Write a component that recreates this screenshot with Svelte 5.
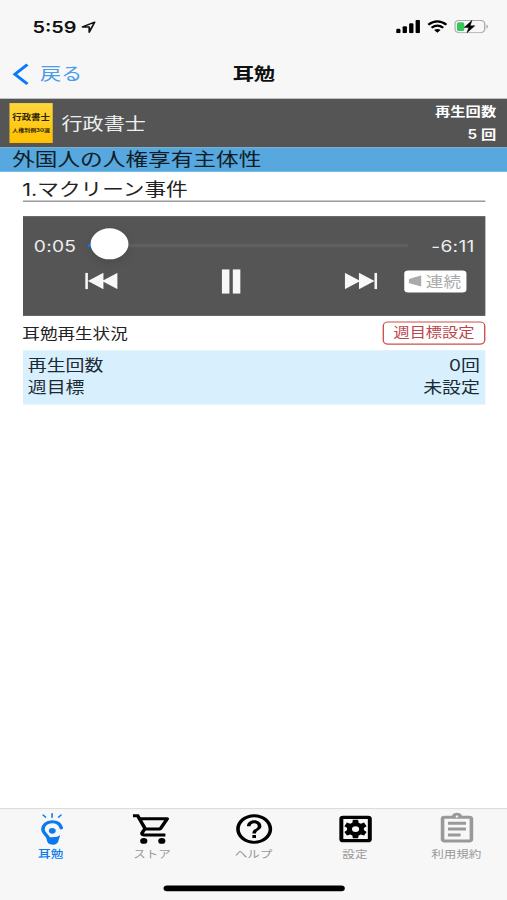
<script>
    const tabs = [
        { label: "耳勉", icon: "ear", active: true },
        { label: "ストア", icon: "cart" },
        { label: "ヘルプ", icon: "help" },
        { label: "設定", icon: "settings" },
        { label: "利用規約", icon: "terms", muted: true },
    ];

    const stats = [
        { label: "再生回数", value: "0回" },
        { label: "週目標", value: "未設定" },
    ];

    const elapsed = 5;
    const duration = 376;

    function formatTime(seconds) {
        const rest = seconds % 60;
        return `${Math.floor(seconds / 60)}:${rest < 10 ? "0" : ""}${rest}`;
    }
</script>

<div class="screen">
    <header>
        <div class="status">
            <span class="clock">5:59</span>
            <svg class="location" width="11" height="11" viewBox="0 0 11 11">
                <path d="M1 5.3 10 1 6 10V5.4Z" fill="none" stroke="#111" stroke-width="1.3" stroke-linejoin="round" />
            </svg>
            <svg class="signal" width="18" height="12" viewBox="0 0 18 12">
                <rect x="0" y="8" width="3.2" height="4" rx="1" />
                <rect x="4.8" y="5.6" width="3.2" height="6.4" rx="1" />
                <rect x="9.6" y="3" width="3.2" height="9" rx="1" />
                <rect x="14.4" y="0" width="3.2" height="12" rx="1" />
            </svg>
            <svg class="wifi" width="15" height="12" viewBox="0 0 15 12">
                <path d="M.8 4.3Q7.5-1.9 14.2 4.3M3.2 7Q7.5 3.2 11.8 7" fill="none" stroke="#000" stroke-width="1.9" />
                <path d="m7.5 11.6-2.4-2.5q2.4-1.9 4.8 0Z" />
            </svg>
            <svg width="25" height="12" viewBox="0 0 25 12">
                <rect x=".5" y=".5" width="22" height="11" rx="3" fill="none" stroke="#aaa" />
                <path d="M23.8 4v4q1.2-.6 1.2-2t-1.2-2Z" fill="#aaa" />
                <rect x="2" y="2" width="5.4" height="8" rx="1.4" fill="#34c759" />
                <path d="M13.1.4 7.3 6.7h3.4L9.4 11.6l5.8-6.3h-3.5Z" stroke="#000" stroke-width=".4" />
            </svg>
        </div>
        <nav>
            <button class="back" type="button">
                <svg width="13" height="20" viewBox="0 0 13 20">
                    <path d="M11.3 1.2 2 10l9.3 8.8" fill="none" stroke="#0a7aff" stroke-width="2.4" />
                </svg>
                戻る
            </button>
            <h1>耳勉</h1>
        </nav>
    </header>

    <main>
        <section class="course">
            <div class="cover">
                <span>行政書士</span>
                <small>人権判例30選</small>
            </div>
            <h2>行政書士</h2>
            <div class="plays">
                <div>再生回数</div>
                <div>5 回</div>
            </div>
        </section>
        <div class="chapter">外国人の人権享有主体性</div>

        <div class="content">
            <h3>1.マクリーン事件</h3>

            <div class="player">
                <div class="progress">
                    <span class="time">{formatTime(elapsed)}</span>
                    <div class="track">
                        <div class="played"></div>
                        <div class="thumb"></div>
                    </div>
                    <span class="time">-{formatTime(duration - elapsed)}</span>
                </div>
                <div class="controls">
                    <button type="button" aria-label="前へ">
                        <svg width="24" height="15" viewBox="0 0 24 15">
                            <path d="M0 0h2v15H0ZM13.5 0v15L2 7.5ZM24 0v15L12.5 7.5Z" />
                        </svg>
                    </button>
                    <button type="button" aria-label="一時停止">
                        <svg width="14" height="22" viewBox="0 0 14 22">
                            <path d="M0 0h5.7v22H0ZM8.2 0h5.7v22H8.2Z" />
                        </svg>
                    </button>
                    <button type="button" aria-label="次へ">
                        <svg width="24" height="15" viewBox="0 0 24 15">
                            <path d="M0 0v15l11.5-7.5ZM10.5 0v15L22 7.5ZM22 0h2v15h-2Z" />
                        </svg>
                    </button>
                    <button class="repeat" type="button">
                        <svg width="10" height="11" viewBox="0 0 10 12">
                            <path d="M0 4.2 2.5 3 10 .5v11L2.5 9 0 8Z" />
                        </svg>
                        連続
                    </button>
                </div>
            </div>

            <div class="stats-head">
                <span>耳勉再生状況</span>
                <button type="button">週目標設定</button>
            </div>
            <dl>
                {#each stats as stat}
                    <div>
                        <dt>{stat.label}</dt>
                        <dd>{stat.value}</dd>
                    </div>
                {/each}
            </dl>
        </div>
    </main>

    <footer>
        <div class="tabs">
            {#each tabs as tab}
                <div class="tab" class:active={tab.active} class:muted={tab.muted}>
                    <svg width="32" height="32" viewBox="0 0 24 24">
                        {#if tab.icon === "ear"}
                            <path d="m7.2 2.2 1.8 2M12.4 1.3v3M17.6 2.2l-1.8 2" fill="none" stroke="currentColor" stroke-width=".9" />
                            <path d="M17.5 11.2C16.9 8.6 15 7.1 12.4 7.1 9.400 7.100 7.300 9.400 7.300 12.300c0 2.300 1.900 3.500 2.700 5.100" fill="none" stroke="currentColor" stroke-width="2" stroke-linecap="round" />
                            <path d="M9 16.600c1.400.900 3.300.900 4.800.800 1.200 0 2.200-.500 3-1.400-.1 1.700-.6 2.400-.8 3.600-.3 2-1.300 3-3.200 3-2.100 0-3-1.300-3.300-3Z" />
                            <circle cx="12.5" cy="13.2" r="1.9" />
                        {:else if tab.icon === "cart"}
                            <path d="M15.55 13c.75 0 1.41-.41 1.75-1.03l3.58-6.49A.996.996 0 0 0 20.01 4H5.21l-.94-2H1v2h2l3.6 7.59-1.35 2.44C4.52 15.37 5.48 17 7 17h12v-2H7l1.1-2h7.45ZM6.16 6h12.15l-2.76 5H8.53L6.16 6Z" />
                            <circle cx="7" cy="20" r="2" />
                            <circle cx="17" cy="20" r="2" />
                        {:else if tab.icon === "help"}
                            <path d="M11 18h2v-2h-2v2Zm1-16C6.48 2 2 6.48 2 12s4.48 10 10 10 10-4.48 10-10S17.52 2 12 2Zm0 18c-4.41 0-8-3.59-8-8s3.59-8 8-8 8 3.59 8 8-3.59 8-8 8Zm0-14c-2.21 0-4 1.79-4 4h2c0-1.1.9-2 2-2s2 .9 2 2c0 2-3 1.75-3 5h2c0-2.25 3-2.5 3-5 0-2.21-1.79-4-4-4Z" />
                        {:else if tab.icon === "settings"}
                            <rect x="4.100" y="4" width="15.800" height="15.800" rx="1" fill="none" stroke="currentColor" stroke-width="2.200" />
                            <path fill-rule="evenodd" d="m17.25 12-.05-.7 1.5-1.2-1.4-2.5-1.8.75-1.2-.7-.3-1.9h-2.9l-.3 1.9-1.2.7-1.8-.75-1.4 2.5 1.5 1.2-.05.7.05.7-1.5 1.2 1.4 2.5 1.8-.75 1.2.7.3 1.9H14l.3-1.9 1.2-.7 1.8.75 1.4-2.5-1.5-1.2ZM12.6 14a2 2 0 1 1 0-4 2 2 0 0 1 0 4Z" transform="translate(-.6 0)" />
                        {:else}
                            <path d="M7 15h7v2H7Zm0-4h10v2H7Zm0-4h10v2H7Zm12-4h-4.180C14.4 1.84 13.3 1 12 1s-2.4.84-2.82 2H5a2 2 0 0 0-2 2v14c0 1.1.9 2 2 2h14c1.1 0 2-.9 2-2V5c0-1.1-.9-2-2-2Zm-7-.25c.41 0 .75.34.75.75s-.34.75-.75.75-.75-.34-.75-.75.34-.75.75-.75ZM19 19H5V5h14v14Z" />
                        {/if}
                    </svg>
                    <span>{tab.label}</span>
                </div>
            {/each}
        </div>
        <div class="home"></div>
    </footer>
</div>

<style>
    :global(body) {
        height: 100vh;
        overflow: hidden;
        background: #fff;
    }

    /* laid out in 375x812 points, stretched to fill the window */
    .screen {
        display: flex;
        flex-direction: column;
        width: 375px;
        height: 812px;
        transform: scale(1.352, 1.1084);
        transform-origin: 0 0;
        background: #fff;
        color: #222;
        font-family: Inter, "Noto Sans CJK JP", sans-serif;
    }

    .screen * {
        box-sizing: border-box;
    }

    svg {
        display: block;
        flex: none;
    }

    button {
        display: flex;
        align-items: center;
        padding: 0;
        border: 0;
        background: none;
        color: inherit;
        font: inherit;
    }

    h1,
    h2,
    h3,
    dl,
    dd {
        margin: 0;
        font-weight: normal;
    }

    header {
        height: 88.5px;
        background: #f7f7f7;
    }

    .status {
        display: flex;
        align-items: center;
        height: 44px;
        padding: 4px 14.5px 0 24px;
    }

    .clock {
        width: 34px;
        margin-top: 1px;
        color: #111;
        font-size: 14.7px;
        font-weight: 600;
    }

    .location {
        margin-left: 2px;
    }

    .signal {
        margin-left: auto;
    }

    .wifi {
        margin: 0 5px;
    }

    nav {
        display: grid;
        grid-template-columns: 1fr auto 1fr;
        align-items: center;
        height: 44px;
        padding: 2px 8px 0 8.5px;
    }

    .back {
        gap: 8px;
        color: #4a9be8;
        font-size: 15.7px;
        line-height: 24px;
    }

    h1 {
        color: #111;
        font-size: 15.7px;
        font-weight: 600;
        line-height: 24px;
    }

    .course {
        display: flex;
        align-items: center;
        height: 44px;
        padding: 0 8px 0 7px;
        background: #555;
        color: #fff;
    }

    .cover {
        display: flex;
        flex-direction: column;
        justify-content: center;
        width: 32px;
        height: 36px;
        margin-top: 1px;
        background: linear-gradient(#ffd63c, #ffc000);
        color: #2d2300;
        font-weight: 700;
        text-align: center;
        white-space: nowrap;
    }

    .cover span {
        font-size: 7px;
        line-height: 13px;
    }

    .cover small {
        font-size: 4.4px;
        line-height: 12px;
    }

    h2 {
        margin: 3px 0 0 6.5px;
        color: #eee;
        font-size: 15.6px;
        line-height: 24px;
    }

    .plays {
        margin: 1px 0 0 auto;
        font-size: 11.3px;
        font-weight: 600;
        line-height: 20px;
        text-align: right;
    }

    .chapter {
        height: 22px;
        padding-left: 9px;
        background: #56a8df;
        color: #111d26;
        font-size: 16.75px;
        line-height: 22px;
    }

    .content {
        padding: 0 16px 0 16.5px;
    }

    h3 {
        height: 27.5px;
        border-bottom: 1px solid #777;
        font-size: 16px;
        line-height: 33px;
    }

    .player {
        height: 90px;
        margin-top: 12.5px;
        padding: 12px 8px 0 8.5px;
        background: #555;
        color: #eee;
    }

    .progress {
        display: flex;
        align-items: center;
        height: 29px;
    }

    .time {
        margin-top: 1px;
        font-size: 14.2px;
        letter-spacing: 0.2px;
    }

    .track {
        position: relative;
        width: 237px;
        height: 3px;
        margin: 1px auto 0 8.5px;
        border-radius: 2px;
        background: #606062;
    }

    .played {
        width: 8px;
        height: 3px;
        border-radius: 2px;
        background: #0a7aff;
    }

    .thumb {
        position: absolute;
        top: -14px;
        left: 2.5px;
        width: 28px;
        height: 28px;
        border-radius: 50%;
        background: #fff;
        box-shadow: 0 3px 8px rgba(0, 0, 0, 0.12);
    }

    .controls {
        display: flex;
        align-items: center;
        height: 24px;
        margin-top: 6px;
        padding-left: 37.5px;
        fill: #f7f7f7;
    }

    .controls button:nth-child(2),
    .controls button:nth-child(3) {
        margin-left: 77px;
    }

    .controls .repeat {
        justify-content: center;
        gap: 3px;
        width: 46px;
        height: 20px;
        margin-left: 20px;
        border-radius: 3px;
        background: #fff;
        color: #aaa;
        fill: #aaa;
        font-size: 13px;
        line-height: 20px;
    }

    .stats-head {
        display: flex;
        align-items: center;
        justify-content: space-between;
        height: 31.5px;
        font-size: 13px;
    }

    .stats-head button {
        justify-content: center;
        width: 76px;
        height: 21px;
        border: 1.5px solid #c9504b;
        border-radius: 4px;
        color: #bb444d;
        font-size: 12px;
        line-height: 18px;
    }

    dl {
        height: 48.5px;
        padding: 4px 4px 0;
        background: #d8f0fe;
        color: #1c2a33;
        font-size: 14px;
        line-height: 20px;
    }

    dl div {
        display: flex;
        justify-content: space-between;
    }

    footer {
        height: 83px;
        margin-top: auto;
        border-top: 1px solid #dcdcdc;
        background: #f7f7f7;
    }

    .tabs {
        display: flex;
        height: 69px;
        padding-top: 2px;
    }

    .tab {
        display: flex;
        flex: 1;
        flex-direction: column;
        align-items: center;
        color: #000;
        fill: currentColor;
    }

    .tab span {
        color: #999;
        font-size: 9.3px;
        line-height: 14px;
    }

    .tab.muted {
        color: #999;
    }

    .tab.active,
    .tab.active span {
        color: #0a7aef;
    }

    .tab.active span {
        font-weight: 500;
    }

    .home {
        width: 134px;
        height: 5px;
        margin: 0 auto;
        border-radius: 3px;
        background: #000;
    }
</style>
